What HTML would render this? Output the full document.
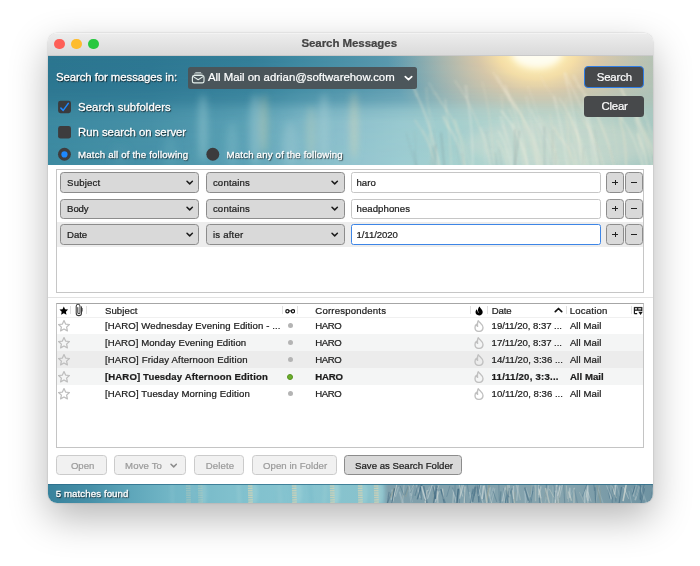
<!DOCTYPE html>
<html>
<head>
<meta charset="utf-8">
<title>Search Messages</title>
<style>
html,body{margin:0;padding:0;}
body{width:700px;height:566px;background:#fff;overflow:hidden;position:relative;
  font-family:"Liberation Sans",sans-serif;font-size:10px;color:#1c1c1c;}
*{box-sizing:border-box;}
.abs{position:absolute;}
.t{position:absolute;white-space:nowrap;-webkit-text-stroke-width:0.22px;}
#win{position:absolute;left:47.5px;top:33px;width:605.1px;height:470.2px;border-radius:9px;background:#fff;
  box-shadow:0 0 0 0.5px rgba(0,0,0,.07), 0 15px 38px rgba(0,0,0,.29), 0 0 3px rgba(0,0,0,.06);}
#clip{position:absolute;left:0;top:0;width:605.1px;height:470.2px;border-radius:9px;overflow:hidden;}
#page{will-change:transform;position:absolute;left:-47.5px;top:-33px;width:700px;height:566px;}
#titlebar{position:absolute;left:47px;top:33px;width:606px;height:22.6px;background:linear-gradient(#f6f6f6 0,#ececec 1.5px,#d9d9d9 100%);}
.tl{position:absolute;top:38.6px;width:10.8px;height:10.8px;border-radius:50%;}
.wt{color:#fff;text-shadow:0.8px 0.8px 1.2px rgba(0,0,0,.9);-webkit-text-stroke-width:0.3px;}
.sel{position:absolute;height:20.4px;border:1px solid #8c8c8c;border-radius:3.5px;background:#d9d9d9;}
.inp{position:absolute;height:20.4px;border:1px solid #c6c6c6;border-radius:2.5px;background:#fff;}
.btn{position:absolute;top:455.3px;height:20.2px;border:1px solid #cbcbcb;border-radius:3.5px;background:#f1f1f1;}
</style>
</head>
<body>
<div id="win">
<div id="clip">
<div id="page">

<div id="titlebar"></div>
<div class="abs" style="left:47px;top:55.2px;width:606px;height:0.8px;background:#c9c9c9;"></div>
<div class="tl" style="left:53.9px;background:#fe5f57;"></div>
<div class="tl" style="left:70.9px;background:#febc2e;"></div>
<div class="tl" style="left:87.9px;background:#28c840;"></div>
<div class="t " style="left:301.40px;top:32.12px;font-size:11.5px;line-height:23px;color:#444;font-weight:bold;letter-spacing:-0.064px;">Search Messages</div>
<div id="hdr" class="abs" style="left:47px;top:55.8px;width:606px;height:109px;overflow:hidden;"><svg class="abs" style="left:0;top:0;" width="606" height="109.4" viewBox="0 0 606 109.4">
<defs>
<linearGradient id="gT" x1="0" x2="1" y1="0" y2="0"><stop offset="0.005" stop-color="#2c7690"/><stop offset="0.170" stop-color="#2e7893"/><stop offset="0.335" stop-color="#347f99"/><stop offset="0.417" stop-color="#3f8aa2"/><stop offset="0.500" stop-color="#4d92a9"/><stop offset="0.583" stop-color="#5d9bb0"/><stop offset="0.632" stop-color="#6fa2b0"/><stop offset="0.698" stop-color="#8caab0"/><stop offset="0.913" stop-color="#b2c0b2"/><stop offset="0.995" stop-color="#aec2b6"/></linearGradient>
<linearGradient id="gB" x1="0" x2="1" y1="0" y2="0"><stop offset="0.005" stop-color="#3f8ca3"/><stop offset="0.170" stop-color="#4a94aa"/><stop offset="0.335" stop-color="#62a7ba"/><stop offset="0.417" stop-color="#84bcca"/><stop offset="0.500" stop-color="#98c8d2"/><stop offset="0.583" stop-color="#a2d0d4"/><stop offset="0.665" stop-color="#a8d3d1"/><stop offset="0.748" stop-color="#b4d8d2"/><stop offset="0.830" stop-color="#bad8d0"/><stop offset="0.913" stop-color="#b3d2ca"/><stop offset="0.995" stop-color="#a8cac4"/></linearGradient>
<linearGradient id="gM" x1="0" x2="0" y1="0" y2="1"><stop offset="0" stop-color="#fff" stop-opacity="0"/><stop offset="0.28" stop-color="#fff" stop-opacity="0.06"/><stop offset="0.4" stop-color="#fff" stop-opacity="0.28"/><stop offset="0.5" stop-color="#fff" stop-opacity="0.74"/><stop offset="0.6" stop-color="#fff" stop-opacity="0.93"/><stop offset="1" stop-color="#fff" stop-opacity="1"/></linearGradient>
<mask id="mB"><rect x="0" y="0" width="606" height="110" fill="url(#gM)"/></mask>
<radialGradient id="sun" cx="0.5" cy="0.5" r="0.5"><stop offset="0" stop-color="#fffadc" stop-opacity="1"/><stop offset="0.13" stop-color="#fff0b8" stop-opacity="1"/><stop offset="0.26" stop-color="#f8dfa6" stop-opacity="0.97"/><stop offset="0.4" stop-color="#e6cca6" stop-opacity="0.82"/><stop offset="0.65" stop-color="#d2c6ae" stop-opacity="0.5"/><stop offset="0.85" stop-color="#c2c2b2" stop-opacity="0.2"/><stop offset="1" stop-color="#c0c0b0" stop-opacity="0"/></radialGradient>
<filter id="b6" x="-50%" y="-50%" width="200%" height="200%"><feGaussianBlur stdDeviation="5"/></filter>
<filter id="b3" x="-50%" y="-50%" width="200%" height="200%"><feGaussianBlur stdDeviation="3"/></filter>
<filter id="b4" x="-10%" y="-50%" width="120%" height="200%"><feGaussianBlur stdDeviation="3.5"/></filter>
<filter id="b1" x="-20%" y="-20%" width="140%" height="140%"><feGaussianBlur stdDeviation="0.9"/></filter>
</defs>
<rect x="0" y="0" width="606" height="110" fill="url(#gT)"/>
<ellipse cx="490" cy="-3" rx="150" ry="100" fill="url(#sun)"/>
<ellipse cx="490" cy="-2" rx="25" ry="14" fill="#fffdf0" filter="url(#b3)"/>
<rect x="0" y="0" width="606" height="110" fill="url(#gB)" mask="url(#mB)" opacity="0.93"/>
<g filter="url(#b4)"><ellipse cx="156" cy="72.2" rx="5" ry="34" fill="#9accd2" opacity="0.45"/><ellipse cx="208" cy="74.2" rx="6" ry="36" fill="#a6d0d4" opacity="0.42"/><ellipse cx="217" cy="68.2" rx="4" ry="30" fill="#dedaae" opacity="0.36"/><ellipse cx="264" cy="78.2" rx="5" ry="28" fill="#d4dcbc" opacity="0.28"/><ellipse cx="277" cy="71.2" rx="5" ry="34" fill="#b0d4d8" opacity="0.4"/><ellipse cx="307" cy="69.2" rx="4" ry="34" fill="#e4dcb2" opacity="0.38"/><ellipse cx="185" cy="88.2" rx="6" ry="22" fill="#7fbcc8" opacity="0.4"/><ellipse cx="243" cy="88.2" rx="8" ry="22" fill="#a6cfd4" opacity="0.35"/><ellipse cx="123" cy="96.2" rx="7" ry="16" fill="#5fa3b5" opacity="0.45"/><ellipse cx="73" cy="101.2" rx="9" ry="12" fill="#4e96aa" opacity="0.45"/></g>
<g filter="url(#b6)"><ellipse cx="515" cy="88" rx="95" ry="24" fill="#f0ead4" opacity="0.22"/></g>
<g filter="url(#b1)"><path d="M529.4 112.0Q528.1 69.4 519.3 41.0" stroke="#f3ead2" stroke-width="1.41" opacity="0.16" fill="none"/><path d="M535.7 112.0Q524.6 63.1 499.1 30.5" stroke="#f0e8d0" stroke-width="1.01" opacity="0.25" fill="none"/><path d="M499.1 30.5l-5.4 -10" stroke="#f0e8d0" stroke-width="1.91" opacity="0.20" fill="none" stroke-linecap="round" stroke-dasharray="1.6 1.2"/><path d="M555.7 112.0Q551.0 82.6 535.2 63.1" stroke="#ebe2c8" stroke-width="1.78" opacity="0.19" fill="none"/><path d="M535.2 63.1l-5.0 -10" stroke="#ebe2c8" stroke-width="2.68" opacity="0.15" fill="none" stroke-linecap="round" stroke-dasharray="1.6 1.2"/><path d="M528.0 112.0Q525.0 93.8 512.9 81.6" stroke="#f0e8d0" stroke-width="1.96" opacity="0.34" fill="none"/><path d="M512.9 81.6l-6.0 -10" stroke="#f0e8d0" stroke-width="2.86" opacity="0.27" fill="none" stroke-linecap="round" stroke-dasharray="1.6 1.2"/><path d="M418.5 112.0Q414.7 86.4 400.9 69.3" stroke="#f0e8d0" stroke-width="1.97" opacity="0.20" fill="none"/><path d="M400.9 69.3l-4.9 -10" stroke="#f0e8d0" stroke-width="2.87" opacity="0.16" fill="none" stroke-linecap="round" stroke-dasharray="1.6 1.2"/><path d="M612.5 112.0Q605.2 83.6 589.3 64.7" stroke="#f0e8d0" stroke-width="1.27" opacity="0.22" fill="none"/><path d="M520.4 112.0Q515.4 75.2 509.3 50.7" stroke="#faf5e6" stroke-width="1.43" opacity="0.35" fill="none"/><path d="M509.3 50.7l-2.2 -10" stroke="#faf5e6" stroke-width="2.33" opacity="0.28" fill="none" stroke-linecap="round" stroke-dasharray="1.6 1.2"/><path d="M494.9 112.0Q487.1 70.9 462.4 43.5" stroke="#f6f0dc" stroke-width="1.29" opacity="0.39" fill="none"/><path d="M462.4 43.5l-5.7 -10" stroke="#f6f0dc" stroke-width="2.19" opacity="0.31" fill="none" stroke-linecap="round" stroke-dasharray="1.6 1.2"/><path d="M511.4 112.0Q507.9 82.2 495.0 62.4" stroke="#ebe2c8" stroke-width="1.10" opacity="0.16" fill="none"/><path d="M425.8 112.0Q425.8 68.9 419.9 40.1" stroke="#faf5e6" stroke-width="1.88" opacity="0.28" fill="none"/><path d="M419.9 40.1l-1.0 -10" stroke="#faf5e6" stroke-width="2.78" opacity="0.22" fill="none" stroke-linecap="round" stroke-dasharray="1.6 1.2"/><path d="M490.5 112.0Q487.2 75.4 481.4 51.1" stroke="#faf5e6" stroke-width="1.94" opacity="0.16" fill="none"/><path d="M481.4 51.1l-1.8 -10" stroke="#faf5e6" stroke-width="2.84" opacity="0.13" fill="none" stroke-linecap="round" stroke-dasharray="1.6 1.2"/><path d="M460.8 112.0Q458.5 74.6 455.4 49.7" stroke="#f3ead2" stroke-width="1.65" opacity="0.17" fill="none"/><path d="M455.4 49.7l-1.0 -10" stroke="#f3ead2" stroke-width="2.55" opacity="0.14" fill="none" stroke-linecap="round" stroke-dasharray="1.6 1.2"/><path d="M572.1 112.0Q568.0 74.0 561.0 48.6" stroke="#ebe2c8" stroke-width="0.95" opacity="0.19" fill="none"/><path d="M507.6 112.0Q502.3 82.7 488.5 63.2" stroke="#faf5e6" stroke-width="1.36" opacity="0.26" fill="none"/><path d="M488.5 63.2l-4.7 -10" stroke="#faf5e6" stroke-width="2.26" opacity="0.21" fill="none" stroke-linecap="round" stroke-dasharray="1.6 1.2"/><path d="M600.6 112.0Q599.9 97.5 593.9 87.8" stroke="#f0e8d0" stroke-width="1.52" opacity="0.40" fill="none"/><path d="M593.9 87.8l-3.3 -10" stroke="#f0e8d0" stroke-width="2.42" opacity="0.32" fill="none" stroke-linecap="round" stroke-dasharray="1.6 1.2"/><path d="M595.8 112.0Q589.1 82.4 574.9 62.7" stroke="#f6f0dc" stroke-width="1.22" opacity="0.36" fill="none"/><path d="M574.9 62.7l-5.1 -10" stroke="#f6f0dc" stroke-width="2.12" opacity="0.29" fill="none" stroke-linecap="round" stroke-dasharray="1.6 1.2"/><path d="M620.8 112.0Q619.2 65.1 616.1 33.8" stroke="#ebe2c8" stroke-width="1.25" opacity="0.32" fill="none"/><path d="M616.1 33.8l-0.7 -10" stroke="#ebe2c8" stroke-width="2.15" opacity="0.26" fill="none" stroke-linecap="round" stroke-dasharray="1.6 1.2"/><path d="M492.2 112.0Q482.5 63.1 455.6 30.5" stroke="#f3ead2" stroke-width="1.59" opacity="0.39" fill="none"/><path d="M455.6 30.5l-5.4 -10" stroke="#f3ead2" stroke-width="2.49" opacity="0.31" fill="none" stroke-linecap="round" stroke-dasharray="1.6 1.2"/><path d="M460.3 112.0Q458.2 95.3 449.7 84.1" stroke="#f3ead2" stroke-width="1.76" opacity="0.24" fill="none"/><path d="M546.8 112.0Q543.1 72.5 536.4 46.2" stroke="#faf5e6" stroke-width="1.19" opacity="0.36" fill="none"/><path d="M552.0 112.0Q541.8 60.9 522.4 26.8" stroke="#f6f0dc" stroke-width="1.75" opacity="0.27" fill="none"/><path d="M522.4 26.8l-4.2 -10" stroke="#f6f0dc" stroke-width="2.65" opacity="0.21" fill="none" stroke-linecap="round" stroke-dasharray="1.6 1.2"/><path d="M444.5 112.0Q441.8 87.4 433.2 70.9" stroke="#faf5e6" stroke-width="1.61" opacity="0.24" fill="none"/><path d="M579.2 112.0Q579.1 84.9 573.8 66.9" stroke="#ebe2c8" stroke-width="1.95" opacity="0.39" fill="none"/><path d="M573.8 66.9l-1.4 -10" stroke="#ebe2c8" stroke-width="2.85" opacity="0.32" fill="none" stroke-linecap="round" stroke-dasharray="1.6 1.2"/><path d="M506.6 112.0Q507.2 92.2 502.6 79.0" stroke="#ebe2c8" stroke-width="0.99" opacity="0.22" fill="none"/><path d="M479.2 112.0Q477.8 74.4 474.3 49.3" stroke="#ebe2c8" stroke-width="1.51" opacity="0.23" fill="none"/><path d="M443.8 112.0Q433.3 59.4 407.6 24.3" stroke="#f3ead2" stroke-width="1.14" opacity="0.31" fill="none"/><path d="M531.3 112.0Q528.1 97.1 524.2 87.2" stroke="#f6f0dc" stroke-width="1.02" opacity="0.37" fill="none"/><path d="M495.3 112.0Q489.2 77.1 477.1 53.8" stroke="#f3ead2" stroke-width="1.12" opacity="0.17" fill="none"/><path d="M468.9 112.0Q469.3 84.9 465.7 66.9" stroke="#f6f0dc" stroke-width="1.50" opacity="0.32" fill="none"/><path d="M511.6 112.0Q507.1 86.9 496.3 70.1" stroke="#f3ead2" stroke-width="1.29" opacity="0.22" fill="none"/><path d="M496.3 70.1l-4.4 -10" stroke="#f3ead2" stroke-width="2.19" opacity="0.18" fill="none" stroke-linecap="round" stroke-dasharray="1.6 1.2"/><path d="M477.4 112.0Q472.7 76.5 462.2 52.8" stroke="#f0e8d0" stroke-width="1.52" opacity="0.30" fill="none"/><path d="M613.2 112.0Q608.4 74.7 592.0 49.8" stroke="#f6f0dc" stroke-width="1.26" opacity="0.25" fill="none"/><path d="M509.1 112.0Q508.0 85.9 504.5 68.5" stroke="#ebe2c8" stroke-width="1.15" opacity="0.26" fill="none"/><path d="M504.5 68.5l-1.3 -10" stroke="#ebe2c8" stroke-width="2.05" opacity="0.21" fill="none" stroke-linecap="round" stroke-dasharray="1.6 1.2"/><path d="M614.3 112.0Q615.0 83.8 611.1 64.9" stroke="#f3ead2" stroke-width="1.72" opacity="0.30" fill="none"/><path d="M611.1 64.9l-0.8 -10" stroke="#f3ead2" stroke-width="2.62" opacity="0.24" fill="none" stroke-linecap="round" stroke-dasharray="1.6 1.2"/><path d="M439.0 112.0Q437.7 98.0 437.3 88.7" stroke="#faf5e6" stroke-width="0.93" opacity="0.19" fill="none"/><path d="M611.5 112.0Q604.5 89.1 593.1 73.8" stroke="#ebe2c8" stroke-width="1.49" opacity="0.15" fill="none"/><path d="M593.1 73.8l-5.8 -10" stroke="#ebe2c8" stroke-width="2.39" opacity="0.12" fill="none" stroke-linecap="round" stroke-dasharray="1.6 1.2"/><path d="M605.3 112.0Q595.7 67.8 576.6 38.4" stroke="#f0e8d0" stroke-width="1.21" opacity="0.33" fill="none"/><path d="M576.6 38.4l-4.7 -10" stroke="#f0e8d0" stroke-width="2.11" opacity="0.26" fill="none" stroke-linecap="round" stroke-dasharray="1.6 1.2"/><path d="M619.2 112.0Q618.8 78.3 612.9 55.8" stroke="#f6f0dc" stroke-width="1.04" opacity="0.15" fill="none"/><path d="M612.9 55.8l-1.3 -10" stroke="#f6f0dc" stroke-width="1.94" opacity="0.12" fill="none" stroke-linecap="round" stroke-dasharray="1.6 1.2"/><path d="M550.1 112.0Q545.0 74.5 539.4 49.5" stroke="#faf5e6" stroke-width="1.72" opacity="0.24" fill="none"/><path d="M539.4 49.5l-2.1 -10" stroke="#faf5e6" stroke-width="2.62" opacity="0.19" fill="none" stroke-linecap="round" stroke-dasharray="1.6 1.2"/><path d="M386.9 112.0Q385.1 88.8 375.4 73.3" stroke="#f3ead2" stroke-width="1.37" opacity="0.20" fill="none"/><path d="M522.6 112.0Q521.7 71.5 517.8 44.5" stroke="#ebe2c8" stroke-width="1.65" opacity="0.27" fill="none"/><path d="M596.4 112.0Q593.1 80.4 588.1 59.3" stroke="#f6f0dc" stroke-width="1.38" opacity="0.32" fill="none"/><path d="M588.1 59.3l-1.9 -10" stroke="#f6f0dc" stroke-width="2.28" opacity="0.26" fill="none" stroke-linecap="round" stroke-dasharray="1.6 1.2"/><path d="M567.7 112.0Q556.9 62.7 531.9 29.9" stroke="#f3ead2" stroke-width="1.97" opacity="0.37" fill="none"/><path d="M531.9 29.9l-5.2 -10" stroke="#f3ead2" stroke-width="2.87" opacity="0.30" fill="none" stroke-linecap="round" stroke-dasharray="1.6 1.2"/><path d="M481.4 112.0Q474.1 77.4 453.8 54.3" stroke="#faf5e6" stroke-width="1.77" opacity="0.35" fill="none"/><path d="M384.2 112.0Q385.0 70.2 380.1 42.3" stroke="#ebe2c8" stroke-width="1.83" opacity="0.16" fill="none"/><path d="M380.1 42.3l-0.7 -10" stroke="#ebe2c8" stroke-width="2.73" opacity="0.13" fill="none" stroke-linecap="round" stroke-dasharray="1.6 1.2"/><path d="M534.9 112.0Q528.9 61.1 519.7 27.2" stroke="#faf5e6" stroke-width="1.38" opacity="0.33" fill="none"/><path d="M519.7 27.2l-2.2 -10" stroke="#faf5e6" stroke-width="2.28" opacity="0.26" fill="none" stroke-linecap="round" stroke-dasharray="1.6 1.2"/><path d="M423.0 112.0Q411.3 67.0 387.8 37.1" stroke="#f3ead2" stroke-width="1.32" opacity="0.18" fill="none"/><path d="M387.8 37.1l-5.6 -10" stroke="#f3ead2" stroke-width="2.22" opacity="0.14" fill="none" stroke-linecap="round" stroke-dasharray="1.6 1.2"/><path d="M392.0 112.0Q390.5 76.0 382.0 52.0" stroke="#f0e8d0" stroke-width="1.00" opacity="0.15" fill="none"/><path d="M496.9 112.0Q495.8 84.8 487.7 66.7" stroke="#f0e8d0" stroke-width="1.07" opacity="0.32" fill="none"/><path d="M500.9 112.0Q495.2 62.7 480.4 29.9" stroke="#faf5e6" stroke-width="1.16" opacity="0.17" fill="none"/><path d="M446.9 112.0Q444.8 60.2 435.1 25.6" stroke="#ebe2c8" stroke-width="1.10" opacity="0.33" fill="none"/><path d="M537.2 112.0Q533.9 95.4 531.7 84.4" stroke="#f6f0dc" stroke-width="1.40" opacity="0.28" fill="none"/><path d="M531.7 84.4l-2.4 -10" stroke="#f6f0dc" stroke-width="2.30" opacity="0.22" fill="none" stroke-linecap="round" stroke-dasharray="1.6 1.2"/><path d="M490.4 112.0Q478.9 60.7 451.8 26.4" stroke="#f3ead2" stroke-width="0.96" opacity="0.33" fill="none"/><path d="M451.8 26.4l-5.4 -10" stroke="#f3ead2" stroke-width="1.86" opacity="0.27" fill="none" stroke-linecap="round" stroke-dasharray="1.6 1.2"/><path d="M609.3 112.0Q599.8 71.8 582.6 45.0" stroke="#ebe2c8" stroke-width="1.05" opacity="0.36" fill="none"/><path d="M464.1 112.0Q460.6 89.5 451.0 74.5" stroke="#faf5e6" stroke-width="1.32" opacity="0.35" fill="none"/><path d="M465.1 112.0Q464.2 87.1 456.1 70.5" stroke="#faf5e6" stroke-width="1.55" opacity="0.28" fill="none"/><path d="M456.1 70.5l-2.6 -10" stroke="#faf5e6" stroke-width="2.45" opacity="0.22" fill="none" stroke-linecap="round" stroke-dasharray="1.6 1.2"/><path d="M557.9 112.0Q549.4 83.1 535.9 63.9" stroke="#f0e8d0" stroke-width="1.44" opacity="0.20" fill="none"/><path d="M538.7 112.0Q533.7 85.0 524.8 67.0" stroke="#f3ead2" stroke-width="1.26" opacity="0.38" fill="none"/><path d="M524.8 67.0l-3.7 -10" stroke="#f3ead2" stroke-width="2.16" opacity="0.30" fill="none" stroke-linecap="round" stroke-dasharray="1.6 1.2"/><path d="M424.6 112.0Q416.9 72.9 394.1 46.9" stroke="#ebe2c8" stroke-width="1.18" opacity="0.19" fill="none"/><path d="M394.1 46.9l-5.6 -10" stroke="#ebe2c8" stroke-width="2.08" opacity="0.15" fill="none" stroke-linecap="round" stroke-dasharray="1.6 1.2"/><path d="M417.3 112.0Q412.3 87.4 401.1 71.1" stroke="#f6f0dc" stroke-width="1.73" opacity="0.24" fill="none"/><path d="M401.1 71.1l-4.7 -10" stroke="#f6f0dc" stroke-width="2.63" opacity="0.19" fill="none" stroke-linecap="round" stroke-dasharray="1.6 1.2"/><path d="M392.3 112.0Q391.6 97.9 385.4 88.6" stroke="#f0e8d0" stroke-width="1.64" opacity="0.18" fill="none"/><path d="M385.4 88.6l-3.5 -10" stroke="#f0e8d0" stroke-width="2.54" opacity="0.14" fill="none" stroke-linecap="round" stroke-dasharray="1.6 1.2"/><path d="M541.9 112.0Q531.7 69.9 512.0 41.9" stroke="#f6f0dc" stroke-width="1.62" opacity="0.29" fill="none"/><path d="M599.5 112.0Q594.3 70.8 586.2 43.4" stroke="#faf5e6" stroke-width="1.71" opacity="0.22" fill="none"/><path d="M417.7 112.0Q417.2 89.3 410.2 74.1" stroke="#f3ead2" stroke-width="1.97" opacity="0.26" fill="none"/><path d="M410.2 74.1l-2.4 -10" stroke="#f3ead2" stroke-width="2.87" opacity="0.21" fill="none" stroke-linecap="round" stroke-dasharray="1.6 1.2"/><path d="M392.8 112.0Q384.0 67.9 369.6 38.6" stroke="#f3ead2" stroke-width="1.82" opacity="0.36" fill="none"/><path d="M369.6 38.6l-3.8 -10" stroke="#f3ead2" stroke-width="2.72" opacity="0.29" fill="none" stroke-linecap="round" stroke-dasharray="1.6 1.2"/><path d="M606.3 112.0Q599.3 70.4 579.0 42.7" stroke="#f6f0dc" stroke-width="0.96" opacity="0.38" fill="none"/><path d="M579.0 42.7l-4.7 -10" stroke="#f6f0dc" stroke-width="1.86" opacity="0.31" fill="none" stroke-linecap="round" stroke-dasharray="1.6 1.2"/><path d="M390.3 112.0Q382.4 83.1 367.5 63.8" stroke="#ebe2c8" stroke-width="1.60" opacity="0.26" fill="none"/><path d="M608.9 112.0Q607.5 91.1 602.4 77.2" stroke="#f0e8d0" stroke-width="0.99" opacity="0.28" fill="none"/><path d="M602.4 77.2l-2.2 -10" stroke="#f0e8d0" stroke-width="1.89" opacity="0.23" fill="none" stroke-linecap="round" stroke-dasharray="1.6 1.2"/><path d="M404.2 112.0Q403.2 77.3 399.3 54.2" stroke="#f0e8d0" stroke-width="1.39" opacity="0.31" fill="none"/><path d="M399.3 54.2l-1.0 -10" stroke="#f0e8d0" stroke-width="2.29" opacity="0.24" fill="none" stroke-linecap="round" stroke-dasharray="1.6 1.2"/><path d="M480.8 112.0Q473.6 68.4 461.6 39.3" stroke="#f6f0dc" stroke-width="1.24" opacity="0.38" fill="none"/><path d="M461.6 39.3l-3.2 -10" stroke="#f6f0dc" stroke-width="2.14" opacity="0.30" fill="none" stroke-linecap="round" stroke-dasharray="1.6 1.2"/></g>
<g filter="url(#b1)"><path d="M567.9 112L563.1 92.6" stroke="#6f8a8c" stroke-width="0.95" opacity="0.17" fill="none"/><path d="M553.8 112L547.6 73.0" stroke="#6f8a8c" stroke-width="0.80" opacity="0.17" fill="none"/><path d="M416.7 112L415.1 97.2" stroke="#6f8a8c" stroke-width="1.16" opacity="0.21" fill="none"/><path d="M369.0 112L359.2 76.9" stroke="#6f8a8c" stroke-width="0.86" opacity="0.22" fill="none"/><path d="M450.2 112L448.5 96.7" stroke="#6f8a8c" stroke-width="0.95" opacity="0.32" fill="none"/><path d="M497.6 112L497.3 70.4" stroke="#6f8a8c" stroke-width="1.31" opacity="0.28" fill="none"/><path d="M468.0 112L467.8 73.0" stroke="#6f8a8c" stroke-width="1.46" opacity="0.32" fill="none"/><path d="M535.3 112L536.7 91.2" stroke="#6f8a8c" stroke-width="1.01" opacity="0.18" fill="none"/><path d="M370.1 112L366.9 94.4" stroke="#6f8a8c" stroke-width="1.24" opacity="0.22" fill="none"/><path d="M369.5 112L367.7 74.8" stroke="#6f8a8c" stroke-width="0.72" opacity="0.16" fill="none"/><path d="M386.8 112L388.9 88.2" stroke="#6f8a8c" stroke-width="1.46" opacity="0.29" fill="none"/><path d="M413.1 112L409.5 85.8" stroke="#6f8a8c" stroke-width="0.96" opacity="0.15" fill="none"/><path d="M504.9 112L506.0 72.7" stroke="#6f8a8c" stroke-width="0.78" opacity="0.27" fill="none"/><path d="M397.5 112L394.0 76.6" stroke="#6f8a8c" stroke-width="1.45" opacity="0.33" fill="none"/><path d="M383.7 112L386.2 89.5" stroke="#6f8a8c" stroke-width="1.07" opacity="0.25" fill="none"/><path d="M467.8 112L472.3 74.7" stroke="#6f8a8c" stroke-width="1.13" opacity="0.37" fill="none"/><path d="M508.0 112L509.0 96.6" stroke="#6f8a8c" stroke-width="1.04" opacity="0.16" fill="none"/><path d="M607.3 112L606.8 98.9" stroke="#6f8a8c" stroke-width="1.09" opacity="0.35" fill="none"/><path d="M455.1 112L451.8 92.9" stroke="#6f8a8c" stroke-width="0.86" opacity="0.28" fill="none"/><path d="M445.8 112L438.8 75.2" stroke="#6f8a8c" stroke-width="0.98" opacity="0.21" fill="none"/><path d="M608.4 112L611.7 72.3" stroke="#6f8a8c" stroke-width="1.19" opacity="0.24" fill="none"/><path d="M390.2 112L387.1 72.6" stroke="#6f8a8c" stroke-width="0.73" opacity="0.19" fill="none"/></g>
</svg></div>
<div class="t wt" style="left:56.00px;top:65.85px;font-size:11.4px;line-height:23px;color:#fff;font-weight:normal;letter-spacing:-0.077px;">Search for messages in:</div>
<div class="abs" style="left:187.5px;top:66.5px;width:229px;height:22px;background:rgba(75,84,88,.97);border-radius:2.5px;"></div>
<svg class="abs" style="left:190px;top:70px;" width="16" height="15" viewBox="190 70 16 15"><path d="M195.3 72.7h5.8M193.9 74.1h8.6" stroke="#e2eeea" stroke-width="0.95" fill="none" opacity="0.9"/><rect x="192.4" y="75.5" width="11.6" height="7.4" rx="1.7" stroke="#e6f1ed" stroke-width="1.15" fill="none"/><path d="M192.9 76.4L198.2 79.7L203.5 76.4" stroke="#e6f1ed" stroke-width="1.1" fill="none" stroke-linejoin="round"/></svg>
<div class="t " style="left:208.00px;top:65.85px;font-size:11.4px;line-height:23px;color:#fff;font-weight:normal;letter-spacing:-0.009px;">All Mail on adrian@softwarehow.com</div>
<svg class="abs" style="left:404px;top:74.6px;" width="9" height="7" viewBox="0 0 9 7"><path d="M1.3 1.6L4.5 4.7L7.7 1.6" stroke="#fff" stroke-width="1.7" fill="none" stroke-linecap="round" stroke-linejoin="round"/></svg>
<div class="abs" style="left:583.6px;top:66.4px;width:60.4px;height:22px;background:#47494b;border:1.7px solid #2f7de6;border-radius:4px;"></div>
<div class="t " style="left:596.70px;top:66.05px;font-size:11.4px;line-height:23px;color:#fff;font-weight:normal;letter-spacing:-0.131px;">Search</div>
<div class="abs" style="left:583.6px;top:95.7px;width:60.4px;height:21.8px;background:#47494b;border-radius:3.5px;"></div>
<div class="t " style="left:601.50px;top:95.05px;font-size:11.4px;line-height:23px;color:#fff;font-weight:normal;letter-spacing:-0.210px;">Clear</div>
<svg class="abs" style="left:56px;top:98px;" width="18" height="66" viewBox="56 98 18 66"><rect x="58.1" y="100.7" width="12.9" height="12.5" rx="2.4" fill="#3a3b3e"/><path d="M60.9 108.1L63.2 110.4L68.3 103.4" stroke="#1e88ff" stroke-width="1.5" fill="none" stroke-linecap="round" stroke-linejoin="round"/><rect x="58.1" y="126.1" width="12.9" height="12.5" rx="2.4" fill="#3d3c3e"/><circle cx="64.45" cy="154.3" r="6.45" fill="#3f3d3f"/><circle cx="64.45" cy="154.4" r="3.1" fill="#1e88ff"/></svg>
<svg class="abs" style="left:204px;top:146px;" width="18" height="18" viewBox="204 146 18 18"><circle cx="212.8" cy="154.3" r="6.45" fill="#3c3b3d"/></svg>
<div class="t wt" style="left:78.10px;top:95.75px;font-size:11.4px;line-height:23px;color:#fff;font-weight:normal;letter-spacing:0.049px;">Search subfolders</div>
<div class="t wt" style="left:78.10px;top:120.95px;font-size:11.4px;line-height:23px;color:#fff;font-weight:normal;letter-spacing:-0.046px;">Run search on server</div>
<div class="t wt" style="left:78.10px;top:145.24px;font-size:9.7px;line-height:19px;color:#fff;font-weight:normal;letter-spacing:0.160px;">Match all of the following</div>
<div class="t wt" style="left:226.50px;top:145.24px;font-size:9.7px;line-height:19px;color:#fff;font-weight:normal;letter-spacing:0.170px;">Match any of the following</div>
<div class="abs" style="left:56px;top:168.6px;width:588px;height:124px;border:1px solid #c6c6c6;background:#fff;"></div>
<div class="abs" style="left:57px;top:222px;width:586px;height:24.6px;background:#ededed;"></div>
<div class="sel" style="left:60.2px;top:172.4px;width:139.2px;"></div>
<div class="t " style="left:67.10px;top:173.07px;font-size:9.6px;line-height:19px;color:#1c1c1c;font-weight:normal;letter-spacing:0.181px;">Subject</div>
<svg class="abs" style="left:186.2px;top:180.0px;" width="7.4" height="5.55" viewBox="0 0 8 6"><path d="M1.1 1.3L4 4.2L6.9 1.3" stroke="#1a1a1a" stroke-width="1.6" fill="none" stroke-linecap="round" stroke-linejoin="round"/></svg>
<div class="sel" style="left:206px;top:172.4px;width:138.6px;"></div>
<div class="t " style="left:212.90px;top:173.07px;font-size:9.6px;line-height:19px;color:#1c1c1c;font-weight:normal;letter-spacing:0.179px;">contains</div>
<svg class="abs" style="left:331.2px;top:180.0px;" width="7.4" height="5.55" viewBox="0 0 8 6"><path d="M1.1 1.3L4 4.2L6.9 1.3" stroke="#1a1a1a" stroke-width="1.6" fill="none" stroke-linecap="round" stroke-linejoin="round"/></svg>
<div class="inp" style="left:351.4px;top:172.4px;width:249.4px;"></div>
<div class="t " style="left:356.50px;top:173.07px;font-size:9.6px;line-height:19px;color:#1c1c1c;font-weight:normal;letter-spacing:0.024px;">haro</div>
<div class="sel" style="left:605.8px;top:172.4px;width:18.6px;"></div>
<div class="sel" style="left:624.6px;top:172.4px;width:18.4px;"></div>
<div class="abs" style="left:612.4px;top:182.0px;width:5.6px;height:1.2px;background:#222;"></div><div class="abs" style="left:614.6px;top:179.8px;width:1.2px;height:5.6px;background:#222;"></div>
<div class="abs" style="left:631.2px;top:182.0px;width:5.4px;height:1.2px;background:#222;"></div>
<div class="sel" style="left:60.2px;top:198.5px;width:139.2px;"></div>
<div class="t " style="left:67.10px;top:199.17px;font-size:9.6px;line-height:19px;color:#1c1c1c;font-weight:normal;letter-spacing:-0.109px;">Body</div>
<svg class="abs" style="left:186.2px;top:206.1px;" width="7.4" height="5.55" viewBox="0 0 8 6"><path d="M1.1 1.3L4 4.2L6.9 1.3" stroke="#1a1a1a" stroke-width="1.6" fill="none" stroke-linecap="round" stroke-linejoin="round"/></svg>
<div class="sel" style="left:206px;top:198.5px;width:138.6px;"></div>
<div class="t " style="left:212.90px;top:199.17px;font-size:9.6px;line-height:19px;color:#1c1c1c;font-weight:normal;letter-spacing:0.179px;">contains</div>
<svg class="abs" style="left:331.2px;top:206.1px;" width="7.4" height="5.55" viewBox="0 0 8 6"><path d="M1.1 1.3L4 4.2L6.9 1.3" stroke="#1a1a1a" stroke-width="1.6" fill="none" stroke-linecap="round" stroke-linejoin="round"/></svg>
<div class="inp" style="left:351.4px;top:198.5px;width:249.4px;"></div>
<div class="t " style="left:356.50px;top:199.17px;font-size:9.6px;line-height:19px;color:#1c1c1c;font-weight:normal;letter-spacing:0.068px;">headphones</div>
<div class="sel" style="left:605.8px;top:198.5px;width:18.6px;"></div>
<div class="sel" style="left:624.6px;top:198.5px;width:18.4px;"></div>
<div class="abs" style="left:612.4px;top:208.1px;width:5.6px;height:1.2px;background:#222;"></div><div class="abs" style="left:614.6px;top:205.9px;width:1.2px;height:5.6px;background:#222;"></div>
<div class="abs" style="left:631.2px;top:208.1px;width:5.4px;height:1.2px;background:#222;"></div>
<div class="sel" style="left:60.2px;top:224.4px;width:139.2px;"></div>
<div class="t " style="left:67.10px;top:225.07px;font-size:9.6px;line-height:19px;color:#1c1c1c;font-weight:normal;letter-spacing:-0.051px;">Date</div>
<svg class="abs" style="left:186.2px;top:232.0px;" width="7.4" height="5.55" viewBox="0 0 8 6"><path d="M1.1 1.3L4 4.2L6.9 1.3" stroke="#1a1a1a" stroke-width="1.6" fill="none" stroke-linecap="round" stroke-linejoin="round"/></svg>
<div class="sel" style="left:206px;top:224.4px;width:138.6px;"></div>
<div class="t " style="left:212.90px;top:225.07px;font-size:9.6px;line-height:19px;color:#1c1c1c;font-weight:normal;letter-spacing:0.225px;">is after</div>
<svg class="abs" style="left:331.2px;top:232.0px;" width="7.4" height="5.55" viewBox="0 0 8 6"><path d="M1.1 1.3L4 4.2L6.9 1.3" stroke="#1a1a1a" stroke-width="1.6" fill="none" stroke-linecap="round" stroke-linejoin="round"/></svg>
<div class="inp" style="left:351.4px;top:224.4px;width:249.4px;border:1.5px solid #3d85e6;"></div>
<div class="t " style="left:356.50px;top:225.07px;font-size:9.6px;line-height:19px;color:#1c1c1c;font-weight:normal;letter-spacing:-0.082px;">1/11/2020</div>
<div class="sel" style="left:605.8px;top:224.4px;width:18.6px;"></div>
<div class="sel" style="left:624.6px;top:224.4px;width:18.4px;"></div>
<div class="abs" style="left:612.4px;top:234.0px;width:5.6px;height:1.2px;background:#222;"></div><div class="abs" style="left:614.6px;top:231.8px;width:1.2px;height:5.6px;background:#222;"></div>
<div class="abs" style="left:631.2px;top:234.0px;width:5.4px;height:1.2px;background:#222;"></div>
<div class="abs" style="left:47px;top:297.3px;width:606px;height:1px;background:#e2e2e2;"></div>
<div class="abs" style="left:55.7px;top:303px;width:588.3px;height:144.6px;border:1px solid #c4c4c4;border-top-color:#a6a6a6;background:#fff;"></div>
<div class="abs" style="left:56.7px;top:317px;width:586.3px;height:0.8px;background:#f0f0f0;"></div>
<div class="abs" style="left:56.7px;top:334px;width:586.3px;height:17px;background:#f4f5f5;"></div>
<div class="abs" style="left:56.7px;top:351px;width:586.3px;height:17px;background:#ececec;"></div>
<div class="abs" style="left:56.7px;top:368px;width:586.3px;height:17px;background:#f4f5f5;"></div>
<div class="abs" style="left:70.2px;top:306px;width:1px;height:8.4px;background:#e0e0e0;"></div>
<div class="abs" style="left:86.4px;top:306px;width:1px;height:8.4px;background:#e0e0e0;"></div>
<div class="abs" style="left:282.3px;top:306px;width:1px;height:8.4px;background:#e0e0e0;"></div>
<div class="abs" style="left:297.0px;top:306px;width:1px;height:8.4px;background:#e0e0e0;"></div>
<div class="abs" style="left:470.1px;top:306px;width:1px;height:8.4px;background:#e0e0e0;"></div>
<div class="abs" style="left:487.1px;top:306px;width:1px;height:8.4px;background:#e0e0e0;"></div>
<div class="abs" style="left:565.7px;top:306px;width:1px;height:8.4px;background:#e0e0e0;"></div>
<div class="abs" style="left:630.7px;top:306px;width:1px;height:8.4px;background:#e0e0e0;"></div>
<svg class="abs" style="left:59.1px;top:306.1px;" width="9.6" height="9.6" viewBox="0 0 12 12"><path d="M6 0.6L7.6 4.1L11.4 4.5L8.6 7.1L9.4 10.9L6 9L2.6 10.9L3.4 7.1L0.6 4.5L4.4 4.1Z" fill="#000"/></svg>
<svg class="abs" style="left:74px;top:303.4px;" width="10" height="14" viewBox="0 0 10 14"><path d="M8.2 5v3.4" stroke="#8a8a8a" stroke-width="1.5" fill="none"/><path d="M7.5 3.8V9.9A2.65 2.75 0 0 1 2.2 9.9V3.3A1.9 2 0 0 1 6 3.3V9.5A1.1 1.1 0 0 1 3.8 9.5V4.6" stroke="#3a3a3a" stroke-width="1.05" fill="none" stroke-linecap="round"/></svg>
<div class="t " style="left:104.90px;top:301.17px;font-size:9.6px;line-height:19px;color:#1c1c1c;font-weight:normal;letter-spacing:0.104px;">Subject</div>
<svg class="abs" style="left:285px;top:307.8px;" width="10.4" height="6.4" viewBox="0 0 10.4 6.4"><circle cx="2.4" cy="3.2" r="1.6" stroke="#111" stroke-width="1.2" fill="none"/><circle cx="8" cy="3.2" r="1.6" stroke="#111" stroke-width="1.2" fill="none"/><path d="M4 2.9h2.4" stroke="#111" stroke-width="1"/></svg>
<div class="t " style="left:315.30px;top:301.17px;font-size:9.6px;line-height:19px;color:#1c1c1c;font-weight:normal;letter-spacing:0.185px;">Correspondents</div>
<svg class="abs" style="left:475.3px;top:306px;" width="8.2" height="9.8" viewBox="0 0 10 12"><path d="M5.6 0.5C6.2 2.6 9.4 4.2 9.4 7.6C9.4 10 7.4 11.6 5 11.6C2.6 11.6 0.6 10 0.6 7.5C0.6 6 1.3 4.8 2.3 4C2.3 5.2 2.8 6 3.6 6.3C3.4 4 4.2 1.8 5.6 0.5Z" fill="#000"/><path d="M3.1 6.9C3.5 7.6 4.3 7.7 4.9 7.2" stroke="#fff" stroke-width="0.9" fill="none" opacity="0.85"/></svg>
<div class="t " style="left:491.80px;top:301.17px;font-size:9.6px;line-height:19px;color:#1c1c1c;font-weight:normal;letter-spacing:-0.137px;">Date</div>
<svg class="abs" style="left:553.7px;top:307.2px;" width="9" height="6" viewBox="0 0 9 6"><path d="M1.3 4.6L4.5 1.5L7.7 4.6" stroke="#111" stroke-width="1.7" fill="none" stroke-linecap="round" stroke-linejoin="round"/></svg>
<div class="t " style="left:569.80px;top:301.17px;font-size:9.6px;line-height:19px;color:#1c1c1c;font-weight:normal;letter-spacing:0.174px;">Location</div>
<svg class="abs" style="left:633px;top:306px;" width="11" height="10" viewBox="633 306 11 10"><path d="M634.4 313.7V307.7H641.8V311M634.4 310.1H641.8M637.7 307.7V310.4M634.4 313.6H637.2" stroke="#151515" stroke-width="1.15" fill="none"/><path d="M634 307.4h8.2" stroke="#151515" stroke-width="0.6"/><path d="M638.3 311.8H642.8L640.55 314.9Z" fill="#151515"/></svg>
<svg class="abs" style="left:57.8px;top:320.1px;" width="12" height="12" viewBox="0 0 12 12"><path d="M6 0.6L7.6 4.1L11.4 4.5L8.6 7.1L9.4 10.9L6 9L2.6 10.9L3.4 7.1L0.6 4.5L4.4 4.1Z" fill="none" stroke="#bebebe" stroke-width="1.25" stroke-linejoin="round"/></svg>
<div class="t " style="left:104.90px;top:315.87px;font-size:9.6px;line-height:19px;color:#1c1c1c;font-weight:normal;letter-spacing:0.094px;">[HARO] Wednesday Evening Edition - ...</div>
<div class="abs" style="left:287.8px;top:323.3px;width:5px;height:5px;border-radius:50%;background:#b4b4b4;"></div>
<div class="t " style="left:315.30px;top:315.87px;font-size:9.6px;line-height:19px;color:#1c1c1c;font-weight:normal;letter-spacing:-0.468px;">HARO</div>
<svg class="abs" style="left:473.5px;top:320.0px;" width="10" height="12" viewBox="0 0 10 12"><path d="M4.3 0.7C5 2.6 9 4.2 9 7.6C9 9.9 7.2 11.4 5 11.4C2.8 11.4 1 9.9 1 7.5C1 6.1 1.6 5 2.5 4.3C2.5 5.4 2.9 6.1 3.6 6.4C3.3 4.2 3.5 2 4.3 0.7Z" fill="none" stroke="#c0c0c0" stroke-width="1.35" stroke-linejoin="round"/></svg>
<div class="t " style="left:491.60px;top:315.87px;font-size:9.6px;line-height:19px;color:#1c1c1c;font-weight:normal;letter-spacing:-0.054px;">19/11/20, 8:37 ...</div>
<div class="t " style="left:569.90px;top:315.87px;font-size:9.6px;line-height:19px;color:#1c1c1c;font-weight:normal;letter-spacing:0.075px;">All Mail</div>
<svg class="abs" style="left:57.8px;top:337.1px;" width="12" height="12" viewBox="0 0 12 12"><path d="M6 0.6L7.6 4.1L11.4 4.5L8.6 7.1L9.4 10.9L6 9L2.6 10.9L3.4 7.1L0.6 4.5L4.4 4.1Z" fill="none" stroke="#bebebe" stroke-width="1.25" stroke-linejoin="round"/></svg>
<div class="t " style="left:104.90px;top:332.87px;font-size:9.6px;line-height:19px;color:#1c1c1c;font-weight:normal;letter-spacing:0.075px;">[HARO] Monday Evening Edition</div>
<div class="abs" style="left:287.8px;top:340.3px;width:5px;height:5px;border-radius:50%;background:#b4b4b4;"></div>
<div class="t " style="left:315.30px;top:332.87px;font-size:9.6px;line-height:19px;color:#1c1c1c;font-weight:normal;letter-spacing:-0.468px;">HARO</div>
<svg class="abs" style="left:473.5px;top:337.0px;" width="10" height="12" viewBox="0 0 10 12"><path d="M4.3 0.7C5 2.6 9 4.2 9 7.6C9 9.9 7.2 11.4 5 11.4C2.8 11.4 1 9.9 1 7.5C1 6.1 1.6 5 2.5 4.3C2.5 5.4 2.9 6.1 3.6 6.4C3.3 4.2 3.5 2 4.3 0.7Z" fill="none" stroke="#c0c0c0" stroke-width="1.35" stroke-linejoin="round"/></svg>
<div class="t " style="left:491.60px;top:332.87px;font-size:9.6px;line-height:19px;color:#1c1c1c;font-weight:normal;letter-spacing:-0.054px;">17/11/20, 8:37 ...</div>
<div class="t " style="left:569.90px;top:332.87px;font-size:9.6px;line-height:19px;color:#1c1c1c;font-weight:normal;letter-spacing:0.075px;">All Mail</div>
<svg class="abs" style="left:57.8px;top:354.1px;" width="12" height="12" viewBox="0 0 12 12"><path d="M6 0.6L7.6 4.1L11.4 4.5L8.6 7.1L9.4 10.9L6 9L2.6 10.9L3.4 7.1L0.6 4.5L4.4 4.1Z" fill="none" stroke="#bebebe" stroke-width="1.25" stroke-linejoin="round"/></svg>
<div class="t " style="left:104.90px;top:349.87px;font-size:9.6px;line-height:19px;color:#1c1c1c;font-weight:normal;letter-spacing:0.151px;">[HARO] Friday Afternoon Edition</div>
<div class="abs" style="left:287.8px;top:357.3px;width:5px;height:5px;border-radius:50%;background:#b4b4b4;"></div>
<div class="t " style="left:315.30px;top:349.87px;font-size:9.6px;line-height:19px;color:#1c1c1c;font-weight:normal;letter-spacing:-0.468px;">HARO</div>
<svg class="abs" style="left:473.5px;top:354.0px;" width="10" height="12" viewBox="0 0 10 12"><path d="M4.3 0.7C5 2.6 9 4.2 9 7.6C9 9.9 7.2 11.4 5 11.4C2.8 11.4 1 9.9 1 7.5C1 6.1 1.6 5 2.5 4.3C2.5 5.4 2.9 6.1 3.6 6.4C3.3 4.2 3.5 2 4.3 0.7Z" fill="none" stroke="#c0c0c0" stroke-width="1.35" stroke-linejoin="round"/></svg>
<div class="t " style="left:491.60px;top:349.87px;font-size:9.6px;line-height:19px;color:#1c1c1c;font-weight:normal;letter-spacing:0.003px;">14/11/20, 3:36 ...</div>
<div class="t " style="left:569.90px;top:349.87px;font-size:9.6px;line-height:19px;color:#1c1c1c;font-weight:normal;letter-spacing:0.075px;">All Mail</div>
<svg class="abs" style="left:57.8px;top:371.1px;" width="12" height="12" viewBox="0 0 12 12"><path d="M6 0.6L7.6 4.1L11.4 4.5L8.6 7.1L9.4 10.9L6 9L2.6 10.9L3.4 7.1L0.6 4.5L4.4 4.1Z" fill="none" stroke="#bebebe" stroke-width="1.25" stroke-linejoin="round"/></svg>
<div class="t " style="left:104.90px;top:366.87px;font-size:9.6px;line-height:19px;color:#1c1c1c;font-weight:bold;letter-spacing:0.132px;">[HARO] Tuesday Afternoon Edition</div>
<div class="abs" style="left:287.1px;top:373.7px;width:6.4px;height:6.4px;border-radius:50%;background:#6cae2c;border:0.8px solid #55921f;"></div>
<div class="t " style="left:315.30px;top:366.87px;font-size:9.6px;line-height:19px;color:#1c1c1c;font-weight:bold;letter-spacing:-0.162px;">HARO</div>
<svg class="abs" style="left:473.5px;top:371.0px;" width="10" height="12" viewBox="0 0 10 12"><path d="M4.3 0.7C5 2.6 9 4.2 9 7.6C9 9.9 7.2 11.4 5 11.4C2.8 11.4 1 9.9 1 7.5C1 6.1 1.6 5 2.5 4.3C2.5 5.4 2.9 6.1 3.6 6.4C3.3 4.2 3.5 2 4.3 0.7Z" fill="none" stroke="#c0c0c0" stroke-width="1.35" stroke-linejoin="round"/></svg>
<div class="t " style="left:491.60px;top:366.87px;font-size:9.6px;line-height:19px;color:#1c1c1c;font-weight:bold;letter-spacing:0.224px;">11/11/20, 3:3...</div>
<div class="t " style="left:569.90px;top:366.87px;font-size:9.6px;line-height:19px;color:#1c1c1c;font-weight:bold;letter-spacing:0.026px;">All Mail</div>
<svg class="abs" style="left:57.8px;top:388.1px;" width="12" height="12" viewBox="0 0 12 12"><path d="M6 0.6L7.6 4.1L11.4 4.5L8.6 7.1L9.4 10.9L6 9L2.6 10.9L3.4 7.1L0.6 4.5L4.4 4.1Z" fill="none" stroke="#bebebe" stroke-width="1.25" stroke-linejoin="round"/></svg>
<div class="t " style="left:104.90px;top:383.87px;font-size:9.6px;line-height:19px;color:#1c1c1c;font-weight:normal;letter-spacing:0.125px;">[HARO] Tuesday Morning Edition</div>
<div class="abs" style="left:287.8px;top:391.3px;width:5px;height:5px;border-radius:50%;background:#b4b4b4;"></div>
<div class="t " style="left:315.30px;top:383.87px;font-size:9.6px;line-height:19px;color:#1c1c1c;font-weight:normal;letter-spacing:-0.468px;">HARO</div>
<svg class="abs" style="left:473.5px;top:388.0px;" width="10" height="12" viewBox="0 0 10 12"><path d="M4.3 0.7C5 2.6 9 4.2 9 7.6C9 9.9 7.2 11.4 5 11.4C2.8 11.4 1 9.9 1 7.5C1 6.1 1.6 5 2.5 4.3C2.5 5.4 2.9 6.1 3.6 6.4C3.3 4.2 3.5 2 4.3 0.7Z" fill="none" stroke="#c0c0c0" stroke-width="1.35" stroke-linejoin="round"/></svg>
<div class="t " style="left:491.60px;top:383.87px;font-size:9.6px;line-height:19px;color:#1c1c1c;font-weight:normal;letter-spacing:0.003px;">10/11/20, 8:36 ...</div>
<div class="t " style="left:569.90px;top:383.87px;font-size:9.6px;line-height:19px;color:#1c1c1c;font-weight:normal;letter-spacing:0.075px;">All Mail</div>
<div class="btn" style="left:56.1px;width:51.0px;"></div>
<div class="t " style="left:70.90px;top:455.67px;font-size:9.6px;line-height:19px;color:#9b9b9b;font-weight:normal;letter-spacing:-0.024px;">Open</div>
<div class="btn" style="left:114.3px;width:72.0px;"></div>
<div class="t " style="left:125.10px;top:455.67px;font-size:9.6px;line-height:19px;color:#9b9b9b;font-weight:normal;letter-spacing:0.122px;">Move To</div>
<svg class="abs" style="left:169.6px;top:462.9px;" width="7.4" height="5.55" viewBox="0 0 8 6"><path d="M1.1 1.3L4 4.2L6.9 1.3" stroke="#8a8a8a" stroke-width="1.6" fill="none" stroke-linecap="round" stroke-linejoin="round"/></svg>
<div class="btn" style="left:193.8px;width:50.5px;"></div>
<div class="t " style="left:205.70px;top:455.67px;font-size:9.6px;line-height:19px;color:#9b9b9b;font-weight:normal;letter-spacing:0.154px;">Delete</div>
<div class="btn" style="left:251.9px;width:85.4px;"></div>
<div class="t " style="left:263.10px;top:455.67px;font-size:9.6px;line-height:19px;color:#9b9b9b;font-weight:normal;letter-spacing:0.044px;">Open in Folder</div>
<div class="btn" style="left:344.4px;width:117.7px;border-color:#8c8c8c;background:#d9d9d9;"></div>
<div class="t " style="left:355.10px;top:455.67px;font-size:9.6px;line-height:19px;color:#1c1c1c;font-weight:normal;letter-spacing:0.012px;">Save as Search Folder</div>
<div id="status" class="abs" style="left:47px;top:484.2px;width:606px;height:19.2px;overflow:hidden;"><svg class="abs" style="left:0;top:0;" width="606" height="19.4" viewBox="0 0 606 19.4">
<defs><linearGradient id="sg" x1="0" x2="1" y1="0" y2="0"><stop offset="0.000" stop-color="#38829c"/><stop offset="0.071" stop-color="#4690a8"/><stop offset="0.137" stop-color="#5ea6ba"/><stop offset="0.203" stop-color="#72b6c6"/><stop offset="0.302" stop-color="#80c0cd"/><stop offset="0.417" stop-color="#86c4d0"/><stop offset="0.533" stop-color="#88c2cc"/><stop offset="0.554" stop-color="#84b8c4"/><stop offset="0.563" stop-color="#7f9fab"/><stop offset="0.847" stop-color="#86a4ae"/><stop offset="1.000" stop-color="#6f93a2"/></linearGradient>
<filter id="sb" x="-30%" y="-30%" width="160%" height="160%"><feGaussianBlur stdDeviation="0.75"/></filter>
<filter id="sb2" x="-30%" y="-30%" width="160%" height="160%"><feGaussianBlur stdDeviation="1.6"/></filter></defs>
<rect x="0" y="0" width="606" height="19.4" fill="url(#sg)"/>
<g filter="url(#sb2)"><ellipse cx="145" cy="9" rx="4" ry="11" fill="#a4d4da" opacity="0.18"/><ellipse cx="157" cy="9" rx="4" ry="11" fill="#a4d4da" opacity="0.18"/><ellipse cx="207" cy="9" rx="4" ry="11" fill="#a4d4da" opacity="0.42"/><ellipse cx="251" cy="9" rx="4" ry="11" fill="#a4d4da" opacity="0.42"/><ellipse cx="289" cy="9" rx="4" ry="11" fill="#a4d4da" opacity="0.42"/><ellipse cx="317" cy="9" rx="4" ry="11" fill="#a4d4da" opacity="0.42"/><ellipse cx="333" cy="9" rx="4" ry="11" fill="#a4d4da" opacity="0.42"/><path d="M146.3 0l0.2 20" stroke="#6aaec0" stroke-width="4.7" opacity="0.20"/><path d="M230.3 0l0.4 20" stroke="#6aaec0" stroke-width="2.8" opacity="0.16"/><path d="M331.9 0l-0.1 20" stroke="#b8dcd8" stroke-width="3.4" opacity="0.22"/><path d="M124.9 0l0.5 20" stroke="#b8dcd8" stroke-width="3.2" opacity="0.12"/><path d="M278.4 0l-1.4 20" stroke="#b8dcd8" stroke-width="2.1" opacity="0.24"/><path d="M289.8 0l-0.9 20" stroke="#b8dcd8" stroke-width="4.2" opacity="0.26"/><path d="M263.0 0l1.7 20" stroke="#6aaec0" stroke-width="4.2" opacity="0.21"/><path d="M324.2 0l-1.5 20" stroke="#6aaec0" stroke-width="2.3" opacity="0.14"/><path d="M141.2 0l1.9 20" stroke="#6aaec0" stroke-width="4.3" opacity="0.26"/><path d="M191.2 0l1.3 20" stroke="#b8dcd8" stroke-width="3.1" opacity="0.21"/><path d="M231.1 0l1.6 20" stroke="#b8dcd8" stroke-width="4.7" opacity="0.12"/><path d="M156.5 0l0.4 20" stroke="#b8dcd8" stroke-width="2.5" opacity="0.26"/><path d="M324.3 0l1.6 20" stroke="#b8dcd8" stroke-width="2.3" opacity="0.22"/><path d="M243.1 0l2.0 20" stroke="#6aaec0" stroke-width="2.9" opacity="0.13"/></g>
<g filter="url(#sb)"><path d="M141 -1l0.6 22" stroke="#d9d4b2" stroke-width="4.6" stroke-dasharray="1.5 0.8" opacity="0.3"/><path d="M153 -1l0.6 22" stroke="#d9d4b2" stroke-width="4.6" stroke-dasharray="1.5 0.8" opacity="0.3"/><path d="M203 -1l0.6 22" stroke="#d9d4b2" stroke-width="4.6" stroke-dasharray="1.5 0.8" opacity="0.7"/><path d="M247 -1l0.6 22" stroke="#d9d4b2" stroke-width="4.6" stroke-dasharray="1.5 0.8" opacity="0.7"/><path d="M285 -1l0.6 22" stroke="#d9d4b2" stroke-width="4.6" stroke-dasharray="1.5 0.8" opacity="0.7"/><path d="M313 -1l0.6 22" stroke="#d9d4b2" stroke-width="4.6" stroke-dasharray="1.5 0.8" opacity="0.7"/><path d="M329 -1l0.6 22" stroke="#d9d4b2" stroke-width="4.6" stroke-dasharray="1.5 0.8" opacity="0.7"/></g>
<g filter="url(#sb)"><path d="M569.6 -1.1l3.0 12.9" stroke="#b8ccd0" stroke-width="0.8" opacity="0.42"/><path d="M546.6 -1.6l1.1 8.5" stroke="#4b748a" stroke-width="1.3" opacity="0.43"/><path d="M576.8 3.1l5.0 11.7" stroke="#dfe6e4" stroke-width="0.7" opacity="0.54"/><path d="M347.5 7.7l-2.1 11.2" stroke="#a9c0c8" stroke-width="1.3" opacity="0.69"/><path d="M430.7 7.6l4.0 12.5" stroke="#5a8094" stroke-width="1.1" opacity="0.51"/><path d="M512.8 4.8l-4.0 19.7" stroke="#8f9c90" stroke-width="1.4" opacity="0.41"/><path d="M510.3 0.4l-2.0 19.7" stroke="#c8d0c8" stroke-width="1.1" opacity="0.52"/><path d="M342.1 7.9l-1.9 12.5" stroke="#2f5a74" stroke-width="1.2" opacity="0.35"/><path d="M510.1 2.7l1.8 12.2" stroke="#5a8094" stroke-width="1.3" opacity="0.60"/><path d="M345.0 7.5l-4.8 12.4" stroke="#3f6880" stroke-width="1.2" opacity="0.42"/><path d="M501.4 1.6l-1.9 12.4" stroke="#c6d4d8" stroke-width="1.2" opacity="0.42"/><path d="M440.8 6.1l4.7 16.2" stroke="#e4e6dc" stroke-width="0.7" opacity="0.50"/><path d="M515.5 0.4l-3.1 13.2" stroke="#dfe6e4" stroke-width="1.3" opacity="0.34"/><path d="M425.9 4.7l-2.8 17.7" stroke="#5a8094" stroke-width="1.6" opacity="0.33"/><path d="M539.4 6.8l-0.5 10.7" stroke="#a9c0c8" stroke-width="0.7" opacity="0.51"/><path d="M390.5 6.4l0.7 18.4" stroke="#e4e6dc" stroke-width="0.9" opacity="0.63"/><path d="M362.1 1.5l-3.7 11.5" stroke="#8f9c90" stroke-width="1.4" opacity="0.41"/><path d="M432.5 0.9l0.7 8.4" stroke="#2f5a74" stroke-width="1.0" opacity="0.38"/><path d="M467.9 7.9l-0.7 19.4" stroke="#8f9c90" stroke-width="1.5" opacity="0.39"/><path d="M540.3 4.6l0.2 11.5" stroke="#e4e6dc" stroke-width="0.9" opacity="0.39"/><path d="M357.4 7.7l-3.8 10.9" stroke="#8f9c90" stroke-width="0.6" opacity="0.62"/><path d="M477.3 7.0l4.0 14.9" stroke="#a9c0c8" stroke-width="0.6" opacity="0.60"/><path d="M385.4 0.4l-4.8 14.4" stroke="#dfe6e4" stroke-width="0.7" opacity="0.67"/><path d="M369.7 0.5l3.6 13.7" stroke="#c6d4d8" stroke-width="1.4" opacity="0.44"/><path d="M392.3 6.9l-3.8 10.9" stroke="#c9d6d4" stroke-width="0.9" opacity="0.66"/><path d="M373.7 2.9l0.7 12.8" stroke="#3f6880" stroke-width="1.4" opacity="0.40"/><path d="M505.9 2.2l-0.3 17.3" stroke="#c9d6d4" stroke-width="0.6" opacity="0.32"/><path d="M373.3 -1.5l-0.2 8.4" stroke="#4b748a" stroke-width="1.3" opacity="0.51"/><path d="M471.3 1.1l-1.5 15.8" stroke="#c6d4d8" stroke-width="1.2" opacity="0.44"/><path d="M390.6 2.3l-3.7 8.0" stroke="#5a8094" stroke-width="1.3" opacity="0.62"/><path d="M492.0 1.7l1.0 17.4" stroke="#3f6880" stroke-width="1.0" opacity="0.62"/><path d="M507.2 -1.5l1.3 17.1" stroke="#2f5a74" stroke-width="0.9" opacity="0.68"/><path d="M451.9 0.5l0.4 16.3" stroke="#3f6880" stroke-width="0.7" opacity="0.47"/><path d="M454.0 7.4l-1.3 18.8" stroke="#3f6880" stroke-width="1.4" opacity="0.40"/><path d="M464.3 7.4l2.3 18.2" stroke="#4b748a" stroke-width="1.1" opacity="0.45"/><path d="M368.3 3.6l-4.0 15.1" stroke="#5a8094" stroke-width="0.6" opacity="0.36"/><path d="M548.1 3.3l0.6 15.9" stroke="#3f6880" stroke-width="1.0" opacity="0.63"/><path d="M431.2 -1.7l-3.8 13.8" stroke="#4b748a" stroke-width="1.3" opacity="0.41"/><path d="M419.8 -1.6l2.7 14.1" stroke="#4b748a" stroke-width="1.3" opacity="0.34"/><path d="M541.2 -1.4l-1.8 14.8" stroke="#c9d6d4" stroke-width="1.4" opacity="0.40"/><path d="M387.5 2.5l2.0 19.3" stroke="#a9c0c8" stroke-width="0.9" opacity="0.54"/><path d="M592.5 2.2l-4.2 14.0" stroke="#c9d6d4" stroke-width="1.6" opacity="0.47"/><path d="M540.8 2.2l0.7 15.0" stroke="#c6d4d8" stroke-width="1.5" opacity="0.57"/><path d="M381.2 7.0l-3.5 9.2" stroke="#2f5a74" stroke-width="1.3" opacity="0.67"/><path d="M478.7 3.9l3.6 9.6" stroke="#b8ccd0" stroke-width="1.4" opacity="0.36"/><path d="M478.2 6.5l0.4 17.4" stroke="#a9c0c8" stroke-width="1.3" opacity="0.64"/><path d="M499.7 3.8l-2.3 10.6" stroke="#8f9c90" stroke-width="0.6" opacity="0.49"/><path d="M442.3 3.7l-2.6 13.8" stroke="#c6d4d8" stroke-width="1.5" opacity="0.47"/><path d="M527.3 4.0l-0.3 18.0" stroke="#c8d0c8" stroke-width="1.4" opacity="0.52"/><path d="M469.0 -1.3l4.5 17.4" stroke="#c8d0c8" stroke-width="1.5" opacity="0.32"/><path d="M584.9 4.5l2.8 8.8" stroke="#a9c0c8" stroke-width="0.8" opacity="0.40"/><path d="M579.3 0.6l-3.1 16.5" stroke="#e4e6dc" stroke-width="1.5" opacity="0.66"/><path d="M407.9 1.1l-0.8 16.7" stroke="#3f6880" stroke-width="0.7" opacity="0.34"/><path d="M564.2 -1.6l-0.5 16.8" stroke="#dfe6e4" stroke-width="0.9" opacity="0.31"/><path d="M428.5 2.9l-2.9 15.0" stroke="#2f5a74" stroke-width="1.6" opacity="0.46"/><path d="M486.0 6.8l-4.2 13.2" stroke="#4b748a" stroke-width="1.0" opacity="0.51"/><path d="M406.8 7.4l-1.3 17.3" stroke="#c9d6d4" stroke-width="1.4" opacity="0.42"/><path d="M521.5 7.4l3.2 9.3" stroke="#d8dcd0" stroke-width="1.5" opacity="0.44"/><path d="M491.8 -0.9l-0.1 12.2" stroke="#c9d6d4" stroke-width="1.3" opacity="0.57"/><path d="M491.9 4.5l2.3 9.8" stroke="#c6d4d8" stroke-width="1.0" opacity="0.67"/><path d="M461.6 7.3l-3.6 12.0" stroke="#4b748a" stroke-width="1.3" opacity="0.54"/><path d="M488.8 -0.1l-0.2 17.4" stroke="#d8dcd0" stroke-width="1.3" opacity="0.34"/><path d="M387.9 3.4l2.4 12.3" stroke="#c9d6d4" stroke-width="0.9" opacity="0.45"/><path d="M574.6 2.8l-2.3 16.3" stroke="#3f6880" stroke-width="1.1" opacity="0.65"/><path d="M594.2 3.4l2.7 12.2" stroke="#b8ccd0" stroke-width="1.4" opacity="0.34"/><path d="M412.0 4.8l0.6 18.9" stroke="#4b748a" stroke-width="0.7" opacity="0.58"/><path d="M492.1 5.4l3.2 17.0" stroke="#d8dcd0" stroke-width="1.2" opacity="0.36"/><path d="M446.6 3.4l-3.3 10.1" stroke="#a9c0c8" stroke-width="1.5" opacity="0.45"/><path d="M418.1 2.4l-0.9 17.8" stroke="#e4e6dc" stroke-width="0.9" opacity="0.66"/><path d="M422.6 7.8l1.9 11.6" stroke="#b8ccd0" stroke-width="1.5" opacity="0.49"/><path d="M501.4 4.3l-3.9 17.1" stroke="#c8d0c8" stroke-width="0.8" opacity="0.37"/><path d="M507.8 -0.1l0.3 8.4" stroke="#a9c0c8" stroke-width="1.1" opacity="0.56"/><path d="M458.9 0.8l1.6 9.8" stroke="#8f9c90" stroke-width="1.1" opacity="0.34"/><path d="M588.4 1.6l-2.7 8.9" stroke="#3f6880" stroke-width="1.1" opacity="0.67"/><path d="M426.2 4.9l-3.7 18.3" stroke="#5a8094" stroke-width="1.2" opacity="0.67"/><path d="M532.3 7.9l5.0 10.5" stroke="#c8d0c8" stroke-width="0.7" opacity="0.38"/><path d="M527.7 2.9l-3.9 8.5" stroke="#a9c0c8" stroke-width="0.7" opacity="0.38"/><path d="M382.4 2.7l-4.3 18.2" stroke="#b8ccd0" stroke-width="0.8" opacity="0.50"/><path d="M345.3 5.6l-1.0 10.2" stroke="#b8ccd0" stroke-width="1.5" opacity="0.59"/><path d="M438.1 2.5l-1.4 12.8" stroke="#5a8094" stroke-width="1.6" opacity="0.62"/><path d="M408.8 -0.6l-0.4 10.3" stroke="#5a8094" stroke-width="0.8" opacity="0.37"/><path d="M448.0 4.4l-3.6 15.3" stroke="#c6d4d8" stroke-width="1.0" opacity="0.37"/><path d="M566.2 2.5l-0.9 16.4" stroke="#2f5a74" stroke-width="0.7" opacity="0.46"/><path d="M446.1 7.1l3.8 10.9" stroke="#3f6880" stroke-width="1.0" opacity="0.38"/><path d="M428.9 1.5l-3.8 8.6" stroke="#4b748a" stroke-width="1.3" opacity="0.41"/><path d="M551.7 5.9l4.6 13.9" stroke="#b8ccd0" stroke-width="1.2" opacity="0.31"/><path d="M430.0 1.2l-4.4 13.2" stroke="#5a8094" stroke-width="0.7" opacity="0.55"/><path d="M367.3 -1.1l-3.3 8.4" stroke="#d8dcd0" stroke-width="0.7" opacity="0.56"/><path d="M582.1 7.0l2.6 12.1" stroke="#a9c0c8" stroke-width="1.1" opacity="0.44"/><path d="M516.8 1.0l1.1 19.4" stroke="#2f5a74" stroke-width="0.7" opacity="0.42"/><path d="M568.5 3.1l0.5 14.4" stroke="#4b748a" stroke-width="1.4" opacity="0.46"/><path d="M565.1 1.9l4.4 12.3" stroke="#c8d0c8" stroke-width="0.8" opacity="0.62"/><path d="M457.4 5.8l-0.2 11.2" stroke="#b8ccd0" stroke-width="0.8" opacity="0.59"/><path d="M502.5 5.0l4.5 8.5" stroke="#c8d0c8" stroke-width="0.8" opacity="0.60"/><path d="M561.2 5.6l1.8 9.2" stroke="#4b748a" stroke-width="0.8" opacity="0.64"/><path d="M512.4 6.7l-0.5 18.8" stroke="#8f9c90" stroke-width="1.3" opacity="0.43"/><path d="M438.9 -0.1l2.9 19.0" stroke="#4b748a" stroke-width="0.9" opacity="0.42"/><path d="M460.6 0.1l1.9 19.7" stroke="#d8dcd0" stroke-width="1.5" opacity="0.36"/><path d="M605.0 0.3l4.7 10.6" stroke="#4b748a" stroke-width="1.2" opacity="0.47"/><path d="M549.9 1.2l3.8 17.4" stroke="#8f9c90" stroke-width="1.1" opacity="0.55"/><path d="M350.2 -0.9l-4.8 19.6" stroke="#e4e6dc" stroke-width="0.8" opacity="0.66"/><path d="M362.2 2.0l3.3 16.2" stroke="#b8ccd0" stroke-width="0.7" opacity="0.49"/><path d="M519.5 1.5l1.0 13.3" stroke="#c8d0c8" stroke-width="0.7" opacity="0.63"/><path d="M499.5 0.1l0.4 13.6" stroke="#2f5a74" stroke-width="1.3" opacity="0.33"/><path d="M432.5 5.5l4.2 16.2" stroke="#b8ccd0" stroke-width="1.0" opacity="0.61"/><path d="M357.1 0.1l-1.5 19.9" stroke="#c9d6d4" stroke-width="0.9" opacity="0.47"/><path d="M361.7 1.2l2.5 10.5" stroke="#a9c0c8" stroke-width="0.8" opacity="0.65"/><path d="M537.5 7.3l0.4 13.0" stroke="#b8ccd0" stroke-width="1.5" opacity="0.66"/><path d="M595.4 6.9l4.8 13.6" stroke="#b8ccd0" stroke-width="1.2" opacity="0.31"/><path d="M597.5 -0.2l-4.0 16.7" stroke="#3f6880" stroke-width="0.9" opacity="0.51"/><path d="M511.6 -0.1l-2.9 13.9" stroke="#3f6880" stroke-width="0.6" opacity="0.49"/><path d="M392.1 0.9l-4.0 11.6" stroke="#e4e6dc" stroke-width="1.0" opacity="0.33"/><path d="M380.4 6.1l-2.2 12.5" stroke="#e4e6dc" stroke-width="1.4" opacity="0.55"/><path d="M593.6 1.1l-0.4 14.3" stroke="#2f5a74" stroke-width="1.1" opacity="0.44"/><path d="M569.2 -1.7l-1.3 12.3" stroke="#dfe6e4" stroke-width="1.4" opacity="0.60"/><path d="M590.1 -1.9l-3.7 14.4" stroke="#c9d6d4" stroke-width="1.1" opacity="0.37"/><path d="M352.6 7.8l2.9 12.3" stroke="#a9c0c8" stroke-width="1.6" opacity="0.45"/><path d="M488.2 -0.1l-4.9 13.2" stroke="#b8ccd0" stroke-width="0.9" opacity="0.32"/><path d="M486.4 2.5l-2.4 16.1" stroke="#4b748a" stroke-width="1.1" opacity="0.59"/><path d="M430.7 2.3l1.3 16.1" stroke="#3f6880" stroke-width="1.5" opacity="0.62"/><path d="M405.8 5.4l3.4 12.9" stroke="#c6d4d8" stroke-width="1.4" opacity="0.43"/><path d="M375.1 -0.3l-4.8 15.7" stroke="#3f6880" stroke-width="1.5" opacity="0.66"/><path d="M465.2 5.5l3.6 19.7" stroke="#d8dcd0" stroke-width="1.1" opacity="0.45"/><path d="M509.7 -0.2l1.8 19.9" stroke="#dfe6e4" stroke-width="1.1" opacity="0.46"/><path d="M434.0 0.8l-2.4 11.4" stroke="#b8ccd0" stroke-width="1.1" opacity="0.53"/><path d="M376.7 2.1l3.5 17.9" stroke="#3f6880" stroke-width="1.5" opacity="0.54"/><path d="M347.3 4.0l-3.8 9.5" stroke="#8f9c90" stroke-width="1.4" opacity="0.60"/><path d="M411.3 4.7l-1.3 14.2" stroke="#2f5a74" stroke-width="1.5" opacity="0.68"/><path d="M512.8 1.1l-1.5 15.8" stroke="#a9c0c8" stroke-width="1.5" opacity="0.46"/><path d="M352.3 7.5l4.4 11.8" stroke="#a9c0c8" stroke-width="1.0" opacity="0.41"/><path d="M374.5 2.1l4.0 13.9" stroke="#dfe6e4" stroke-width="1.6" opacity="0.59"/><path d="M527.5 5.4l3.4 15.6" stroke="#4b748a" stroke-width="1.4" opacity="0.30"/><path d="M415.2 -1.3l-2.3 13.8" stroke="#c8d0c8" stroke-width="0.9" opacity="0.52"/><path d="M351.7 2.9l-3.3 9.8" stroke="#a9c0c8" stroke-width="1.3" opacity="0.58"/><path d="M465.2 4.5l-3.6 8.7" stroke="#2f5a74" stroke-width="1.4" opacity="0.37"/><path d="M390.2 6.7l-4.5 19.5" stroke="#c6d4d8" stroke-width="1.1" opacity="0.45"/><path d="M367.9 -0.2l-4.7 9.3" stroke="#2f5a74" stroke-width="0.7" opacity="0.42"/><path d="M442.6 -1.2l-3.1 19.3" stroke="#8f9c90" stroke-width="1.6" opacity="0.69"/><path d="M405.4 3.5l4.0 9.2" stroke="#5a8094" stroke-width="1.4" opacity="0.49"/><path d="M538.6 5.5l2.8 14.8" stroke="#c9d6d4" stroke-width="1.1" opacity="0.52"/><path d="M458.4 2.6l-1.2 17.1" stroke="#c9d6d4" stroke-width="0.9" opacity="0.60"/><path d="M540.8 7.6l3.4 10.0" stroke="#dfe6e4" stroke-width="0.9" opacity="0.38"/><path d="M353.3 2.1l3.7 9.4" stroke="#3f6880" stroke-width="0.6" opacity="0.65"/><path d="M553.4 4.9l0.3 17.2" stroke="#8f9c90" stroke-width="0.7" opacity="0.52"/><path d="M458.1 3.9l-2.8 13.5" stroke="#c6d4d8" stroke-width="1.2" opacity="0.55"/><path d="M498.6 4.0l4.8 19.2" stroke="#c8d0c8" stroke-width="1.5" opacity="0.63"/><path d="M416.4 0.7l-3.8 14.0" stroke="#dfe6e4" stroke-width="1.3" opacity="0.44"/><path d="M513.2 2.3l-2.3 9.6" stroke="#dfe6e4" stroke-width="0.9" opacity="0.62"/><path d="M386.5 3.3l-0.6 15.4" stroke="#8f9c90" stroke-width="0.7" opacity="0.47"/><path d="M567.8 0.9l-2.6 12.6" stroke="#e4e6dc" stroke-width="0.8" opacity="0.33"/><path d="M477.8 3.5l3.8 13.2" stroke="#3f6880" stroke-width="1.5" opacity="0.58"/><path d="M436.6 1.7l-1.3 13.3" stroke="#dfe6e4" stroke-width="1.5" opacity="0.57"/><path d="M367.1 -0.5l-2.8 12.5" stroke="#b8ccd0" stroke-width="1.2" opacity="0.36"/><path d="M361.0 2.4l-3.0 8.3" stroke="#5a8094" stroke-width="1.3" opacity="0.43"/><path d="M459.0 6.3l3.4 19.0" stroke="#5a8094" stroke-width="1.0" opacity="0.57"/><path d="M371.6 0.2l-3.6 11.7" stroke="#2f5a74" stroke-width="1.2" opacity="0.35"/><path d="M385.9 2.3l3.0 12.6" stroke="#4b748a" stroke-width="1.1" opacity="0.69"/><path d="M466.6 1.9l0.1 13.2" stroke="#c6d4d8" stroke-width="1.2" opacity="0.56"/><path d="M456.8 4.4l2.5 18.5" stroke="#4b748a" stroke-width="0.7" opacity="0.65"/><path d="M540.4 -1.3l-4.9 13.8" stroke="#5a8094" stroke-width="1.0" opacity="0.66"/><path d="M562.2 4.4l3.8 10.7" stroke="#5a8094" stroke-width="0.9" opacity="0.56"/><path d="M597.7 4.4l-4.7 19.2" stroke="#3f6880" stroke-width="1.1" opacity="0.53"/><path d="M362.0 6.2l3.2 19.0" stroke="#a9c0c8" stroke-width="1.0" opacity="0.44"/><path d="M462.1 0.3l0.7 12.1" stroke="#c9d6d4" stroke-width="1.2" opacity="0.53"/><path d="M437.4 1.5l2.7 18.9" stroke="#c9d6d4" stroke-width="1.5" opacity="0.60"/><path d="M394.0 5.2l3.6 15.6" stroke="#3f6880" stroke-width="1.1" opacity="0.64"/><path d="M388.6 7.4l-3.8 19.0" stroke="#4b748a" stroke-width="1.0" opacity="0.38"/><path d="M389.3 1.3l-2.5 18.6" stroke="#3f6880" stroke-width="1.3" opacity="0.59"/><path d="M402.9 1.9l-3.2 11.0" stroke="#5a8094" stroke-width="0.9" opacity="0.58"/><path d="M430.9 0.1l-2.0 10.1" stroke="#4b748a" stroke-width="0.8" opacity="0.49"/><path d="M395.5 4.7l1.1 10.1" stroke="#e4e6dc" stroke-width="1.4" opacity="0.46"/><path d="M484.7 -0.2l-2.0 12.5" stroke="#8f9c90" stroke-width="0.7" opacity="0.51"/><path d="M462.4 3.8l-2.3 18.8" stroke="#3f6880" stroke-width="1.3" opacity="0.39"/><path d="M559.7 1.5l5.0 13.8" stroke="#b8ccd0" stroke-width="0.8" opacity="0.59"/><path d="M430.5 -0.6l-1.8 12.2" stroke="#c8d0c8" stroke-width="0.7" opacity="0.42"/><path d="M508.9 6.6l-0.5 13.9" stroke="#c6d4d8" stroke-width="1.2" opacity="0.63"/><path d="M393.8 5.0l4.8 15.1" stroke="#4b748a" stroke-width="1.2" opacity="0.57"/><path d="M416.9 7.9l3.4 17.0" stroke="#5a8094" stroke-width="0.9" opacity="0.30"/><path d="M522.2 5.6l-0.8 12.4" stroke="#c8d0c8" stroke-width="0.8" opacity="0.42"/><path d="M390.0 5.1l-1.8 9.9" stroke="#2f5a74" stroke-width="1.5" opacity="0.49"/><path d="M485.1 -0.0l-0.9 14.9" stroke="#b8ccd0" stroke-width="0.7" opacity="0.32"/><path d="M469.2 -0.3l1.7 9.4" stroke="#a9c0c8" stroke-width="1.2" opacity="0.35"/><path d="M443.5 3.2l-1.0 8.8" stroke="#c9d6d4" stroke-width="0.9" opacity="0.43"/><path d="M593.2 0.1l-3.9 12.5" stroke="#4b748a" stroke-width="0.7" opacity="0.45"/><path d="M523.0 3.7l0.1 10.4" stroke="#dfe6e4" stroke-width="0.8" opacity="0.69"/><path d="M552.5 1.4l-3.9 18.4" stroke="#c8d0c8" stroke-width="0.7" opacity="0.33"/><path d="M604.8 7.7l-1.7 17.1" stroke="#5a8094" stroke-width="0.8" opacity="0.57"/><path d="M411.8 -0.7l4.0 13.3" stroke="#c9d6d4" stroke-width="1.0" opacity="0.53"/><path d="M494.0 2.3l-2.0 11.3" stroke="#e4e6dc" stroke-width="1.5" opacity="0.36"/><path d="M347.5 4.4l-2.9 17.1" stroke="#2f5a74" stroke-width="1.1" opacity="0.68"/></g>
<rect x="0" y="0" width="606" height="0.9" fill="#2a6c88" opacity="0.85"/>
</svg></div>
<div class="t wt" style="left:55.70px;top:484.14px;font-size:9.7px;line-height:19px;color:#fff;font-weight:normal;letter-spacing:0.081px;">5 matches found</div>
</div></div></div>
</body>
</html>
